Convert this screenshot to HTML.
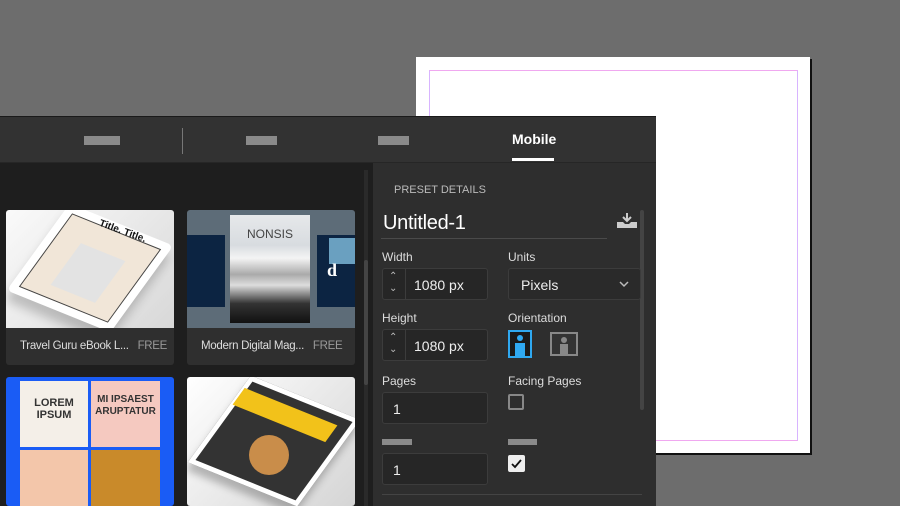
<!DOCTYPE html>
<html><head><meta charset="utf-8"><style>
*{margin:0;padding:0;box-sizing:border-box}
body{width:900px;height:506px;overflow:hidden;background:#6d6d6d;position:relative;font-family:"Liberation Sans",sans-serif;color:#e6e6e6}
.abs{position:absolute}
.page{left:416px;top:57px;width:394px;height:396px;background:#fff;box-shadow:2px 2px 0 #111}
.margin{left:429px;top:70px;width:369px;height:371px;border:1px solid #f0a8f0;border-left-color:#d8b4ff;border-right-color:#d8b4ff}
.dlg{left:0;top:117px;width:656px;height:389px;background:#333;box-shadow:0 -1px 0 #1a1a1a}
.topbar{left:0;top:117px;width:656px;height:46px;background:#323232;border-bottom:1px solid #262626}
.bar{background:#8a8a8a;height:9px}
.left{left:0;top:163px;width:373px;height:343px;background:#1e1e1e}
.right{left:373px;top:163px;width:283px;height:343px;background:#2e2e2e}
.card{background:#2f2f2f;border-radius:3px;overflow:hidden}
.cap{font-size:11.5px;letter-spacing:-0.3px;color:#ddd;padding:12px 0 0 14px;white-space:nowrap}
.cap span{color:#999;margin-left:6px}
.lbl{font-size:12px;color:#ddd}
.field{background:#262626;border:1px solid #3c3c3c;border-radius:3px;height:32px;font-size:14px;color:#eee}
</style></head><body>
<div class="abs page"></div>
<div class="abs margin"></div>
<div class="abs dlg"></div>
<div class="abs topbar"></div>
<div class="abs bar" style="left:84px;top:136px;width:36px"></div>
<div class="abs" style="left:182px;top:128px;width:1px;height:26px;background:#777"></div>
<div class="abs bar" style="left:246px;top:136px;width:31px"></div>
<div class="abs bar" style="left:378px;top:136px;width:31px"></div>
<div class="abs" style="left:512px;top:131px;font-size:14px;font-weight:bold;color:#fff">Mobile</div>
<div class="abs" style="left:512px;top:158px;width:42px;height:3px;background:#fff"></div>
<div class="abs left"></div>
<div class="abs" style="left:364px;top:170px;width:4px;height:336px;background:#2a2a2a"></div>
<div class="abs" style="left:364px;top:260px;width:4px;height:125px;background:#444;border-radius:2px"></div>
<div class="abs right"></div>
<!-- cards -->
<div class="abs card" style="left:6px;top:210px;width:168px;height:155px">
 <div style="height:118px;background:linear-gradient(135deg,#fafafa,#d8d8d8);position:relative;overflow:hidden">
  <div style="position:absolute;left:28px;top:6px;width:112px;height:104px;background:#fff;transform:rotate(22deg) skewX(-14deg);border-radius:6px;box-shadow:4px 10px 10px rgba(0,0,0,.2)"></div>
  <div style="position:absolute;left:36px;top:14px;width:96px;height:88px;background:#f1e6d8;transform:rotate(22deg) skewX(-14deg);border:1px solid #444"></div>
  <div style="position:absolute;left:58px;top:38px;width:48px;height:50px;background:#e3e3e3;transform:rotate(22deg) skewX(-14deg)"></div>
  <div style="position:absolute;left:92px;top:16px;font-size:10px;font-weight:bold;color:#111;transform:rotate(20deg)">Title. Title.</div>
 </div>
 <div class="cap">Travel Guru eBook L... <span>FREE</span></div>
</div>
<div class="abs card" style="left:187px;top:210px;width:168px;height:155px">
 <div style="height:118px;background:#5d6c78;position:relative;overflow:hidden">
  <div style="position:absolute;left:0;top:25px;width:38px;height:72px;background:#0c2442"></div>
  <div style="position:absolute;left:130px;top:25px;width:38px;height:72px;background:#0c2442"></div>
  <div style="position:absolute;left:142px;top:28px;width:26px;height:26px;background:#6aa0c0"></div>
  <div style="position:absolute;left:140px;top:50px;font:bold 18px 'Liberation Serif',serif;color:#fff">d</div>
  <div style="position:absolute;left:43px;top:5px;width:80px;height:108px;background:linear-gradient(#e6e8ea 0,#d8dce0 28%,#f4f4f4 40%,#aaa 55%,#ddd 65%,#333 82%,#111)"></div>
  <div style="position:absolute;left:43px;top:17px;width:80px;text-align:center;font-size:12px;color:#444">NONSIS</div>
 </div>
 <div class="cap">Modern Digital Mag... <span>FREE</span></div>
</div>
<div class="abs card" style="left:6px;top:377px;width:168px;height:129px;background:#1a5cf5">
 <div style="position:absolute;left:14px;top:4px;width:68px;height:66px;background:#f4efe8;font:bold 11px 'Liberation Sans';color:#333;text-align:center;padding-top:16px;line-height:12px">LOREM<br>IPSUM</div>
 <div style="position:absolute;left:85px;top:4px;width:69px;height:66px;background:#f5c9c0;font:bold 10px 'Liberation Sans';color:#333;text-align:center;padding-top:13px;line-height:12px">MI IPSAEST<br>ARUPTATUR</div>
 <div style="position:absolute;left:14px;top:73px;width:68px;height:56px;background:#f3c6aa"></div>
 <div style="position:absolute;left:85px;top:73px;width:69px;height:56px;background:#c98a2a"></div>
</div>
<div class="abs card" style="left:187px;top:377px;width:168px;height:129px;background:linear-gradient(135deg,#fff,#d5d5d5)">
 <div style="position:absolute;left:28px;top:12px;width:118px;height:104px;background:#333;transform:rotate(22deg) skewX(-14deg);border:5px solid #fff;box-shadow:3px 8px 8px rgba(0,0,0,.25)"></div>
 <div style="position:absolute;left:48px;top:28px;width:100px;height:20px;background:#f2c21a;transform:rotate(22deg) skewX(-14deg)"></div>
 <div style="position:absolute;left:62px;top:58px;width:40px;height:40px;border-radius:50%;background:#c98d4a"></div>
</div>
<!-- right panel -->
<div class="abs" style="left:394px;top:184px;font-size:11px;color:#bbb">PRESET DETAILS</div>
<div class="abs" style="left:383px;top:212px;font-size:20px;color:#fff;letter-spacing:-0.3px">Untitled-1</div>
<div class="abs" style="left:381px;top:238px;width:226px;height:1px;background:#4a4a4a"></div>
<svg class="abs" style="left:616px;top:212px" width="22" height="18" viewBox="0 0 22 18"><path d="M11 1v7M7 5l4 4 4-4" stroke="#ccc" stroke-width="2" fill="none"/><path d="M1 10h6l2 2h4l2-2h6v6H1z" fill="#ccc"/></svg>
<div class="abs" style="left:640px;top:210px;width:4px;height:200px;background:#444;border-radius:2px"></div>
<div class="abs lbl" style="left:382px;top:250px">Width</div>
<div class="abs lbl" style="left:508px;top:250px">Units</div>
<div class="abs field" style="left:382px;top:268px;width:106px"><div style="position:absolute;left:22px;top:0;width:1px;height:30px;background:#3c3c3c"></div><div style="position:absolute;left:6px;top:2px;font-size:10px;color:#bbb;line-height:12px">&#8963;<br>&#8964;</div><div style="position:absolute;left:31px;top:8px">1080 px</div></div>
<div class="abs field" style="left:508px;top:268px;width:133px;background:#2a2a2a"><div style="position:absolute;left:12px;top:8px">Pixels</div><svg style="position:absolute;right:11px;top:12px" width="10" height="7"><path d="M1 1l4 4 4-4" stroke="#bbb" stroke-width="1.5" fill="none"/></svg></div>
<div class="abs lbl" style="left:382px;top:311px">Height</div>
<div class="abs lbl" style="left:508px;top:311px">Orientation</div>
<div class="abs field" style="left:382px;top:329px;width:106px"><div style="position:absolute;left:22px;top:0;width:1px;height:30px;background:#3c3c3c"></div><div style="position:absolute;left:6px;top:2px;font-size:10px;color:#bbb;line-height:12px">&#8963;<br>&#8964;</div><div style="position:absolute;left:31px;top:8px">1080 px</div></div>
<svg class="abs" style="left:508px;top:330px" width="24" height="28"><rect x="1" y="1" width="22" height="26" fill="#1a1a1a" stroke="#2fa8f0" stroke-width="2"/><circle cx="12" cy="8" r="3" fill="#2fa8f0"/><path d="M7 13h10v13H7z" fill="#2fa8f0"/></svg>
<svg class="abs" style="left:550px;top:332px" width="28" height="24"><rect x="1" y="1" width="26" height="22" fill="#333" stroke="#888" stroke-width="2"/><circle cx="14" cy="8" r="3" fill="#888"/><path d="M10 12h8v10h-8z" fill="#888"/></svg>
<div class="abs lbl" style="left:382px;top:374px">Pages</div>
<div class="abs lbl" style="left:508px;top:374px">Facing Pages</div>
<div class="abs field" style="left:382px;top:392px;width:106px"><div style="position:absolute;left:10px;top:8px">1</div></div>
<div class="abs" style="left:508px;top:394px;width:16px;height:16px;border:2px solid #888;border-radius:2px"></div>
<div class="abs bar" style="left:382px;top:439px;width:30px;height:6px;background:#8a8a8a"></div>
<div class="abs bar" style="left:508px;top:439px;width:29px;height:6px;background:#8a8a8a"></div>
<div class="abs field" style="left:382px;top:453px;width:106px"><div style="position:absolute;left:10px;top:8px">1</div></div>
<div class="abs" style="left:508px;top:455px;width:17px;height:17px;background:#eee;border-radius:2px"><svg width="17" height="17"><path d="M4 9l3 3 6-7" stroke="#111" stroke-width="1.8" fill="none"/></svg></div>
<div class="abs" style="left:382px;top:494px;width:260px;height:1px;background:#444"></div>
</body></html>
